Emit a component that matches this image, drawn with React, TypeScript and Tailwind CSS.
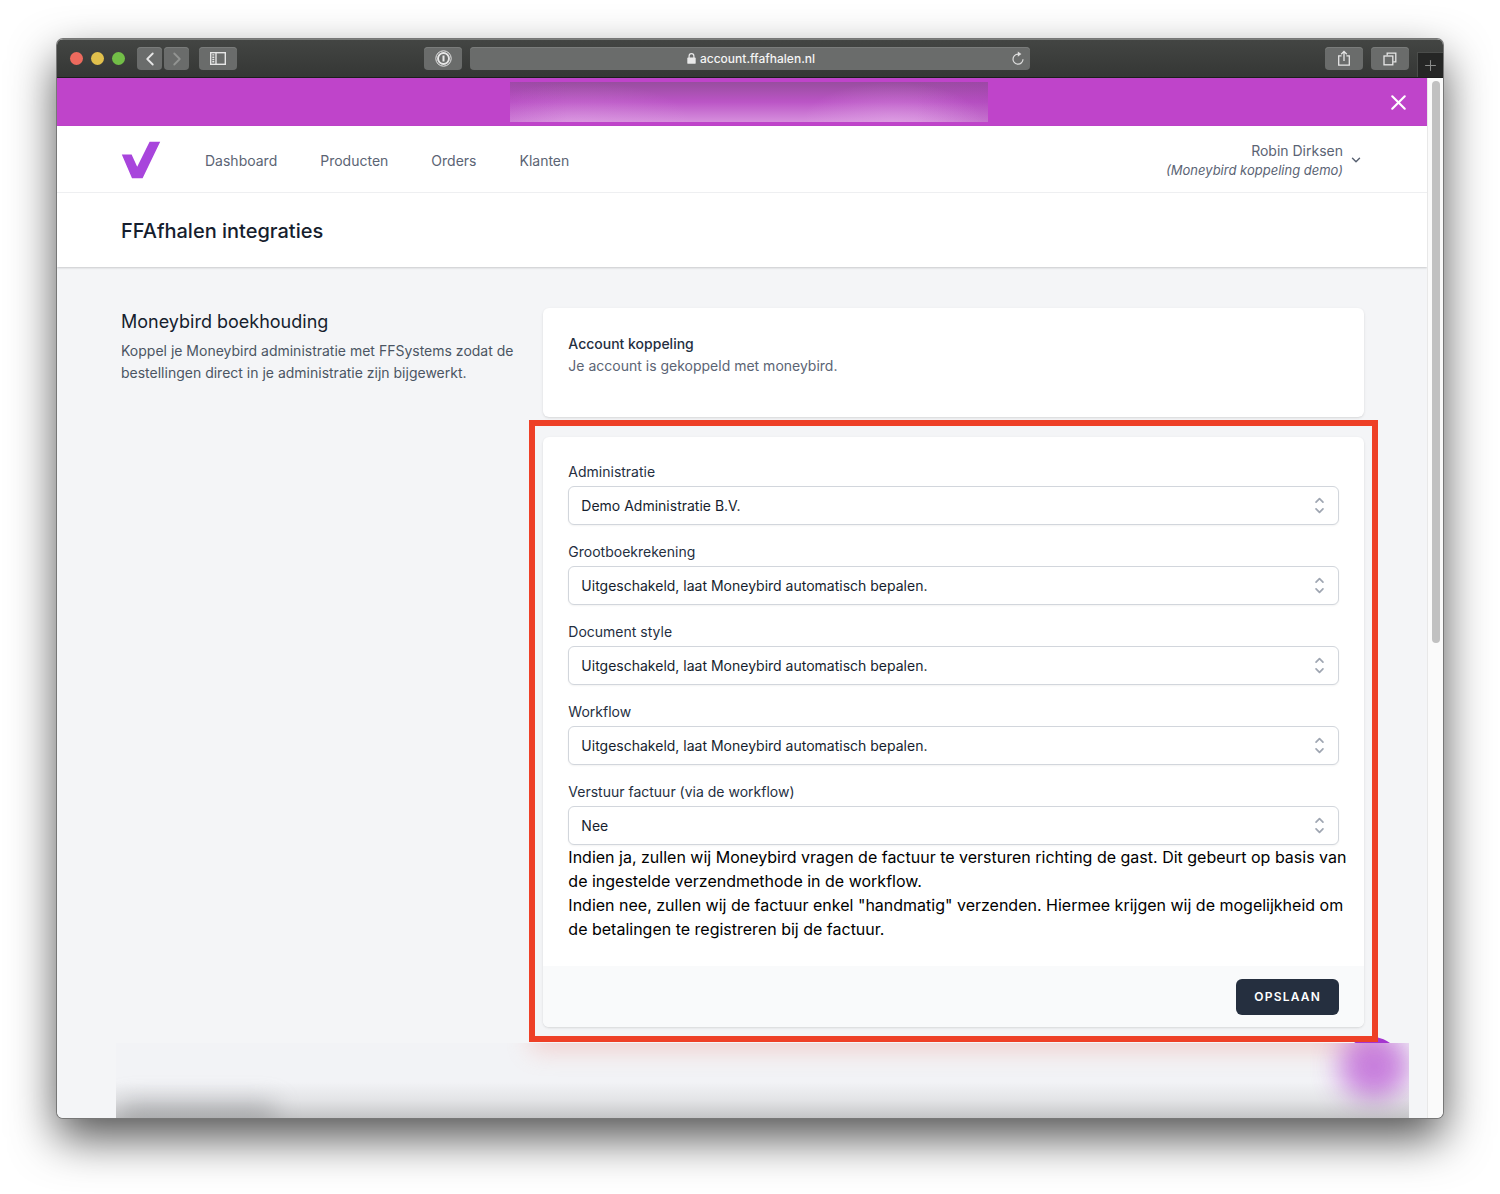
import React, { useState } from 'react';
import { ChevronDown, ChevronLeft, ChevronRight, Plus, X } from 'lucide-react';

const AUTO = 'Uitgeschakeld, laat Moneybird automatisch bepalen.';

const fields = [
  { id: 'administration', label: 'Administratie', options: ['Demo Administratie B.V.'] },
  { id: 'ledger', label: 'Grootboekrekening', options: [AUTO] },
  { id: 'style', label: 'Document style', options: [AUTO] },
  { id: 'workflow', label: 'Workflow', options: [AUTO] },
  { id: 'send', label: 'Verstuur factuur (via de workflow)', options: ['Nee', 'Ja'] },
];

const navLinks = ['Dashboard', 'Producten', 'Orders', 'Klanten'];

const toolButton =
  'flex h-[23px] items-center justify-center rounded bg-[#6a6c6b] text-[#e6e6e6] shadow-[inset_0_1px_0_#7a7c7b]';

function Toolbar() {
  return (
    <div className="grid h-[39px] grid-cols-[1fr_560px_1fr] items-center border-b border-t border-b-[#1c1e1c] border-t-[#7b7d7b] bg-gradient-to-b from-[#434543] to-[#353735]">
      <div className="flex items-center pl-[13px] pr-2">
        <div className="flex gap-2">
          <span className="h-[13px] w-[13px] rounded-full bg-[#ed6a5e]" />
          <span className="h-[13px] w-[13px] rounded-full bg-[#e1c04c]" />
          <span className="h-[13px] w-[13px] rounded-full bg-[#72be47]" />
        </div>
        <div className="ml-3 flex gap-0.5">
          <button aria-label="Vorige" className={`${toolButton} w-[25px]`}>
            <ChevronLeft size={22} strokeWidth={2} />
          </button>
          <button aria-label="Volgende" className={`${toolButton} w-[25px]`}>
            <ChevronRight size={22} strokeWidth={2} className="text-[#929492]" />
          </button>
        </div>
        <button aria-label="Navigatiekolom" className={`${toolButton} ml-[10px] w-[38px]`}>
          <svg width="16" height="13" viewBox="0 0 16 13" fill="none" stroke="currentColor">
            <rect x="0.7" y="0.7" width="14.6" height="11.6" strokeWidth="1.4" />
            <path d="M6 0.5v12" strokeWidth="1.4" />
            <path d="M3.3 2.2v8.6" strokeWidth="2" strokeDasharray="1.4 0.9" />
          </svg>
        </button>
        <button aria-label="Wachtwoorden" className={`${toolButton} ml-auto w-[38px]`}>
          <svg width="17" height="17" viewBox="0 0 17 17" fill="none" stroke="currentColor">
            <circle cx="8.5" cy="8.5" r="7.7" strokeWidth="1" />
            <circle cx="8.5" cy="8.5" r="5.5" strokeWidth="1.9" />
            <path d="M8.5 5.6v5.8" strokeWidth="2" />
          </svg>
        </button>
      </div>

      <div className="flex h-[23px] items-center rounded bg-[#6a6c6b] px-[5px] shadow-[inset_0_1px_0_#7a7c7b]">
        <span className="w-4" />
        <span className="flex flex-1 items-center justify-center gap-1 text-[12px] font-medium text-[#f4f4f4]">
          <svg width="9" height="11" viewBox="0 0 9 11">
            <rect x="0.3" y="4.6" width="8.4" height="6.2" rx="0.9" fill="#e9e9e9" />
            <path d="M2.1 5V3a2.4 2.4 0 0 1 4.8 0v2" fill="none" stroke="#e9e9e9" strokeWidth="1.2" />
          </svg>
          account.ffafhalen.nl
        </span>
        <button aria-label="Herlaad" className="text-[#dedede]">
          <svg width="14" height="15" viewBox="0 0 14 15" fill="none" stroke="currentColor" strokeWidth="1.2">
            <path d="M7 3.2A5 5 0 1 0 12 8.3" />
            <path d="M6.8 0.4L10.4 3.1L6.8 5.8Z" fill="currentColor" stroke="none" />
          </svg>
        </button>
      </div>

      <div className="flex items-center justify-end gap-2 self-stretch">
        <button aria-label="Deel" className={`${toolButton} w-[38px]`}>
          <svg width="14" height="17" viewBox="0 0 14 17" fill="none" stroke="currentColor" strokeWidth="1.3">
            <path d="M4.6 5.8H1.7v9.4h10.6V5.8H9.4" />
            <path d="M7 11V1.6M4.2 4.2L7 1.4l2.8 2.8" />
          </svg>
        </button>
        <button aria-label="Tabbladen" className={`${toolButton} w-[38px]`}>
          <svg width="14" height="14" viewBox="0 0 14 14" fill="none" stroke="currentColor" strokeWidth="1.3">
            <rect x="1" y="4" width="8.8" height="8.8" />
            <path d="M4.2 3.6V1.2h8.6v8.6h-2.6" />
          </svg>
        </button>
        <button
          aria-label="Nieuw tabblad"
          className="flex h-[25px] w-[26px] items-center justify-center self-end border-l border-t border-[#4b4d4b] bg-[#252625] text-[#8b8d8b]"
        >
          <Plus size={17} strokeWidth={1.5} />
        </button>
      </div>
    </div>
  );
}

function Banner() {
  return (
    <div className="grid h-12 grid-cols-[1fr_478px_1fr] items-center bg-[#bf44ca] pl-[14px]">
      <div className="relative col-start-2 h-10 bg-gradient-to-b from-[#984d9f] via-[#bb55c6] to-[#d68fdd]">
        <div className="absolute inset-0 bg-[radial-gradient(ellipse_110px_40px_at_15%_100%,rgba(228,176,232,0.25),transparent),radial-gradient(ellipse_90px_40px_at_80%_100%,rgba(232,184,236,0.35),transparent),linear-gradient(to_right,rgba(175,60,190,0.25),transparent_12%,transparent_85%,rgba(165,60,178,0.35))]" />
      </div>
      <div className="flex justify-end pr-4">
        <button aria-label="Sluiten" className="text-white">
          <X size={25} strokeWidth={2} />
        </button>
      </div>
    </div>
  );
}

function Nav() {
  return (
    <nav className="flex h-[67px] items-center border-b border-[#eeeff1] pl-16 pr-16 pt-0.5 text-[14px] text-[#5b6474]">
      <a href="#" aria-label="FFAfhalen">
        <svg width="40" height="38" viewBox="0 0 40 38">
          <path d="M0.8 13.6H10.6L16.2 25.8L28.6 0.8H39.2L21.6 37.2H11Z" fill="#a845dc" />
        </svg>
      </a>
      <div className="ml-11 flex gap-[43px]">
        {navLinks.map((link) => (
          <a key={link} href="#">
            {link}
          </a>
        ))}
      </div>
      <button className="ml-auto flex items-center gap-1.5 text-right">
        <span>
          <span className="block leading-5">Robin Dirksen</span>
          <em className="block text-[13px] leading-[18px]">(Moneybird koppeling demo)</em>
        </span>
        <ChevronDown size={14} strokeWidth={2.5} />
      </button>
    </nav>
  );
}

function SelectField({ id, label, options }: { id: string; label: string; options: string[] }) {
  const [value, setValue] = useState(options[0]);

  return (
    <div>
      <label htmlFor={id} className="block text-[14px] leading-5 text-[#252f3f]">
        {label}
      </label>
      <div className="relative mt-1">
        <select
          id={id}
          value={value}
          onChange={(e) => setValue(e.target.value)}
          className="block h-[39px] w-full appearance-none rounded-md border border-[#d2d6dc] bg-white px-3 text-[14px] text-[#161e2e] shadow-xs"
        >
          {options.map((option) => (
            <option key={option}>{option}</option>
          ))}
        </select>
        <svg
          className="pointer-events-none absolute right-2 top-2 h-[23px] w-[23px]"
          viewBox="0 0 20 20"
          fill="none"
          stroke="#9fa6b2"
          strokeWidth="1.5"
          strokeLinecap="round"
          strokeLinejoin="round"
        >
          <path d="M7 7l3-3 3 3m0 6l-3 3-3-3" />
        </svg>
      </div>
    </div>
  );
}

// Redacted strip at the bottom of the window, with the chat bubble peeking out above it
function BlurredStrip() {
  return (
    <div className="relative ml-[59px] mr-[18px] h-[75px]">
      <div className="absolute -top-1.5 right-[19px] flex h-1.5 w-9 justify-center overflow-hidden">
        <span className="h-[60px] w-[60px] shrink-0 rounded-full bg-[#a535cf]" />
      </div>
      <div className="absolute inset-0 overflow-hidden bg-[#f2f3f6]">
        <div className="absolute -top-5 left-[415px] right-[30px] h-7 bg-[#ee9c94] opacity-40 blur-[12px]" />
        <div className="absolute right-0 -top-3 h-[70px] w-[70px] rounded-full bg-[#bd62d6] opacity-80 blur-[14px]" />
        <div className="absolute -bottom-4 left-1 h-8 w-[155px] bg-[#8e9094] opacity-50 blur-[12px]" />
        <div className="absolute inset-x-0 bottom-0 h-9 bg-gradient-to-t from-[#8e8e8e]/45 via-[#8e8e8e]/15 to-transparent" />
      </div>
    </div>
  );
}

export default function App() {
  return (
    <div className="min-h-screen bg-white px-[57px] pb-[75px] pt-[39px] font-['Inter','Liberation_Sans',sans-serif]">
      <div className="rounded-md shadow-[0_0_0_1px_#777,0_20px_46px_rgba(0,0,0,0.68)]">
        <div className="overflow-hidden rounded-md">
          <Toolbar />
          <div className="flex">
            <div className="min-w-0 flex-1 bg-[#f4f5f7]">
              <Banner />
              <div className="relative bg-white shadow-[0_1px_2px_rgba(0,0,0,0.18)]">
                <Nav />
                <header className="px-16 pb-[21px] pt-6">
                  <h1 className="text-[20px] font-medium leading-[29px] text-[#161e2e]">FFAfhalen integraties</h1>
                </header>
              </div>

              <main className="grid grid-cols-3 gap-6 pb-4 pl-16 pr-[63px] pt-[41px]">
                <div>
                  <h2 className="text-[18px] leading-7 text-[#161e2e]">Moneybird boekhouding</h2>
                  <p className="mt-1 text-[14px] leading-[22px] text-[#4b5563]">
                    Koppel je Moneybird administratie met FFSystems zodat de bestellingen direct in je administratie zijn bijgewerkt.
                  </p>
                </div>

                <div className="col-span-2 flex flex-col gap-5">
                  <section className="rounded-md bg-white px-[25px] pb-10 pt-[25px] shadow">
                    <h3 className="text-[14px] font-medium leading-[22px] text-[#252f3f]">Account koppeling</h3>
                    <p className="text-[14px] leading-[22px] text-[#5b6474]">Je account is gekoppeld met moneybird.</p>
                  </section>

                  <form className="relative rounded-md bg-white shadow" onSubmit={(e) => e.preventDefault()}>
                    <div className="px-[25px] pb-[25px] pt-[25px]">
                      <div className="flex flex-col gap-[17px]">
                        {fields.map((field) => (
                          <SelectField key={field.id} {...field} />
                        ))}
                      </div>
                      <p className="-mr-3 text-[16px] leading-6 text-black">
                        Indien ja, zullen wij Moneybird vragen de factuur te versturen richting de gast. Dit gebeurt op basis van de ingestelde verzendmethode in de workflow.
                        <br />
                        Indien nee, zullen wij de factuur enkel "handmatig" verzenden. Hiermee krijgen wij de mogelijkheid om de betalingen te registreren bij de factuur.
                      </p>
                    </div>
                    <div className="flex justify-end rounded-b-md bg-[#f9fafb] px-[25px] pb-3 pt-[13px]">
                      <button className="h-9 rounded-md bg-[#252f3f] px-[18px] text-[12px] font-semibold uppercase tracking-widest text-white">
                        Opslaan
                      </button>
                    </div>
                    {/* Highlight frame */}
                    <div className="pointer-events-none absolute -bottom-[15px] -left-[14px] -right-[14px] -top-[17px] z-10 border-[6px] border-[#ee4027]" />
                  </form>
                </div>
              </main>
              <BlurredStrip />
            </div>

            {/* Scrollbar */}
            <div className="relative w-4 shrink-0 border-l border-[#e8e8e8] bg-[#fafafa]">
              <div className="absolute right-[3px] top-[3px] h-[54%] w-2 rounded-full bg-[#c1c1c1]" />
            </div>
          </div>
        </div>
      </div>
    </div>
  );
}
